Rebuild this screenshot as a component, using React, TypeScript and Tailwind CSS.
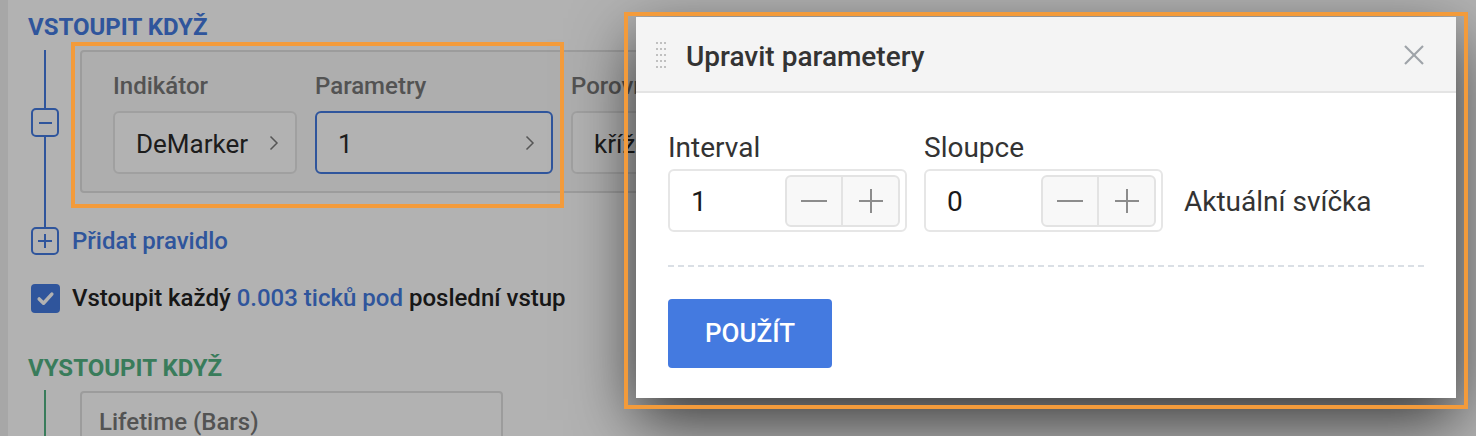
import React from "react";

const FONT = { fontFamily: 'Roboto, "Liberation Sans", Arial, sans-serif' };

/** Šipka vpravo uvnitř výběrového pole */
function Chevron() {
  return (
    <svg width="10" height="16" viewBox="0 0 10 16" fill="none">
      <polyline points="1.5,1.5 8,8 1.5,14.5" stroke="#7c7c7c" strokeWidth="1.5" />
    </svg>
  );
}

function SelectField({ value, width, active }: { value: string; width: string; active?: boolean }) {
  return (
    <div
      className={`${width} h-[63px] rounded-[6px] border-2 bg-white flex items-center justify-between pl-[21px] pr-[16px] ${
        active ? "border-[#447ae0]" : "border-[#e6e6e6]"
      }`}
    >
      <span className="text-[26px] leading-[30px] text-[#2a2a2a] pt-[3px]">{value}</span>
      <Chevron />
    </div>
  );
}

function RuleColumn({ label, value, width, active }: { label: string; value: string; width: string; active?: boolean }) {
  return (
    <div className="flex flex-col">
      <span className="text-[24px] leading-[28px] font-medium text-[#787878]">{label}</span>
      <div className="mt-[11px]">
        <SelectField value={value} width={width} active={active} />
      </div>
    </div>
  );
}

/** Číselné pole s tlačítky − / + */
function Stepper({ value }: { value: string }) {
  return (
    <div className="w-[239px] h-[63px] rounded-[6px] border-2 border-[#e6e6e6] flex items-center justify-between pl-[21px] pr-[5px]">
      <span className="text-[28px] leading-[34px] text-[#1a1a1a] pt-[3px]">{value}</span>
      <div className="flex h-[52px] rounded-[6px] border-2 border-[#e3e3e3] bg-[#f8f8f8]">
        <div className="w-[56px] flex items-center justify-center border-r-2 border-[#e3e3e3]">
          <div className="w-[26px] h-[2px] bg-[#8c8c8c]" />
        </div>
        <div className="w-[55px] flex items-center justify-center">
          <svg width="24" height="24" viewBox="0 0 24 24">
            <line x1="12" y1="0" x2="12" y2="24" stroke="#8c8c8c" strokeWidth="2" />
            <line x1="0" y1="12" x2="24" y2="12" stroke="#8c8c8c" strokeWidth="2" />
          </svg>
        </div>
      </div>
    </div>
  );
}

function ParamsDialog() {
  return (
    <div className="absolute left-[636px] top-[17px] w-[820px] h-[381px] bg-white shadow-[0_22px_60px_rgba(0,0,0,0.7)] flex flex-col">
      {/* Hlavička s úchytem */}
      <div className="h-[76px] bg-[#f4f4f4] border-b-2 border-[#e4e4e4] flex items-center pl-[20px] pr-[32px] pt-[6px]">
        <div className="grid grid-cols-3 gap-x-[2px] gap-y-[4px] -mt-[4px]">
          {Array.from({ length: 15 }).map((_, i) => (
            <div key={i} className="w-[2px] h-[2px] bg-[#c0c0c0]" />
          ))}
        </div>
        <span className="ml-[20px] text-[28px] leading-[34px] font-medium text-[#333333]">Upravit parametery</span>
        <div className="ml-auto -mt-[4px]">
          <svg width="20" height="20" viewBox="0 0 20 20">
            <line x1="1" y1="1" x2="19" y2="19" stroke="#9ea3a8" strokeWidth="2.2" />
            <line x1="19" y1="1" x2="1" y2="19" stroke="#9ea3a8" strokeWidth="2.2" />
          </svg>
        </div>
      </div>

      <div className="px-[32px] pt-[38px]">
        <div className="flex items-end">
          <div className="flex flex-col">
            <span className="text-[28px] leading-[34px] text-[#333333]">Interval</span>
            <div className="mt-[4px]">
              <Stepper value="1" />
            </div>
          </div>
          <div className="flex flex-col ml-[17px]">
            <span className="text-[28px] leading-[34px] text-[#333333]">Sloupce</span>
            <div className="mt-[4px]">
              <Stepper value="0" />
            </div>
          </div>
          <div className="h-[63px] flex items-center ml-[21px] pt-[3px]">
            <span className="text-[28px] leading-[34px] text-[#333333]">Aktuální svíčka</span>
          </div>
        </div>

        <div className="mt-[33px] border-t-2 border-dashed border-[#dadfe5]" />

        <button className="mt-[32px] w-[164px] h-[69px] rounded-[4px] bg-[#447ae0] text-white text-[26px] font-medium">
          POUŽÍT
        </button>
      </div>
    </div>
  );
}

export default function App() {
  return (
    <div className="relative w-[1476px] h-[436px] overflow-hidden bg-white flex" style={FONT}>
      <div className="w-[8px] bg-[#f0f0f0]" />

      <div className="flex-1 pl-[20px] pt-[13px]">
        <div className="text-[24px] leading-[28px] font-bold text-[#447ae0]">VSTOUPIT KDYŽ</div>

        {/* Pravidlo */}
        <div className="mt-[9px] flex h-[177px]">
          <div className="w-[34px] flex flex-col items-center">
            <div className="w-[2px] h-[58px] bg-[#447ae0]" />
            <div className="w-[28px] h-[29px] rounded-[5px] border-2 border-[#447ae0] flex items-center justify-center">
              <div className="w-[13px] h-[2px] bg-[#447ae0]" />
            </div>
            <div className="w-[2px] flex-1 bg-[#447ae0]" />
          </div>
          <div className="ml-[18px] w-[760px] h-[143px] rounded-[4px] border-2 border-[#e0e0e0] bg-[#f9f9f9] pl-[31px] pt-[20px] flex gap-[18px]">
            <RuleColumn label="Indikátor" value="DeMarker" width="w-[184px]" />
            <RuleColumn label="Parametry" value="1" width="w-[238px]" active />
            <RuleColumn label="Porovnání" value="křížení nad" width="w-[230px]" />
          </div>
        </div>

        <div className="flex items-center h-[28px]">
          <div className="w-[34px] flex justify-center">
            <div className="w-[28px] h-[28px] rounded-[5px] border-2 border-[#447ae0] flex items-center justify-center">
              <svg width="14" height="14" viewBox="0 0 14 14">
                <line x1="7" y1="0" x2="7" y2="14" stroke="#447ae0" strokeWidth="2" />
                <line x1="0" y1="7" x2="14" y2="7" stroke="#447ae0" strokeWidth="2" />
              </svg>
            </div>
          </div>
          <span className="ml-[10px] text-[24px] leading-[28px] font-medium text-[#447ae0]">Přidat pravidlo</span>
        </div>

        <div className="mt-[29px] flex items-center h-[29px]">
          <div className="w-[34px] flex justify-center">
            <div className="w-[29px] h-[29px] rounded-[4px] bg-[#447ae0] flex items-center justify-center">
              <svg width="19" height="19" viewBox="0 0 24 24" fill="none">
                <polyline points="4,12.5 9.5,18 20,6.5" stroke="white" strokeWidth="4.4" strokeLinecap="round" strokeLinejoin="round" />
              </svg>
            </div>
          </div>
          <span className="ml-[10px] text-[24px] leading-[29px] font-medium text-[#222222]">
            Vstoupit každý <span className="text-[#447ae0]">0.003 ticků pod</span> poslední vstup
          </span>
        </div>

        <div className="mt-[41px] text-[24px] leading-[28px] font-bold text-[#52b283]">VYSTOUPIT KDYŽ</div>

        <div className="mt-[8px] flex h-[60px]">
          <div className="w-[34px] flex justify-center">
            <div className="w-[2px] h-full bg-[#52b283]" />
          </div>
          <div className="ml-[18px] mt-[1px] w-[423px] h-[80px] rounded-[4px] border-2 border-[#e0e0e0] pl-[17px] pt-[15px]">
            <span className="text-[24px] leading-[28px] font-medium text-[#787878]">Lifetime (Bars)</span>
          </div>
        </div>
      </div>

      {/* Ztmavení pod dialogem */}
      <div className="absolute inset-0 bg-black/30" />

      <ParamsDialog />

      {/* Zvýraznění */}
      <div className="absolute left-[71px] top-[42px] w-[493px] h-[166px] border-4 border-[#f39b3b]" />
      <div className="absolute left-[624px] top-[12px] w-[844px] h-[397px] border-4 border-[#f39b3b]" />
    </div>
  );
}
